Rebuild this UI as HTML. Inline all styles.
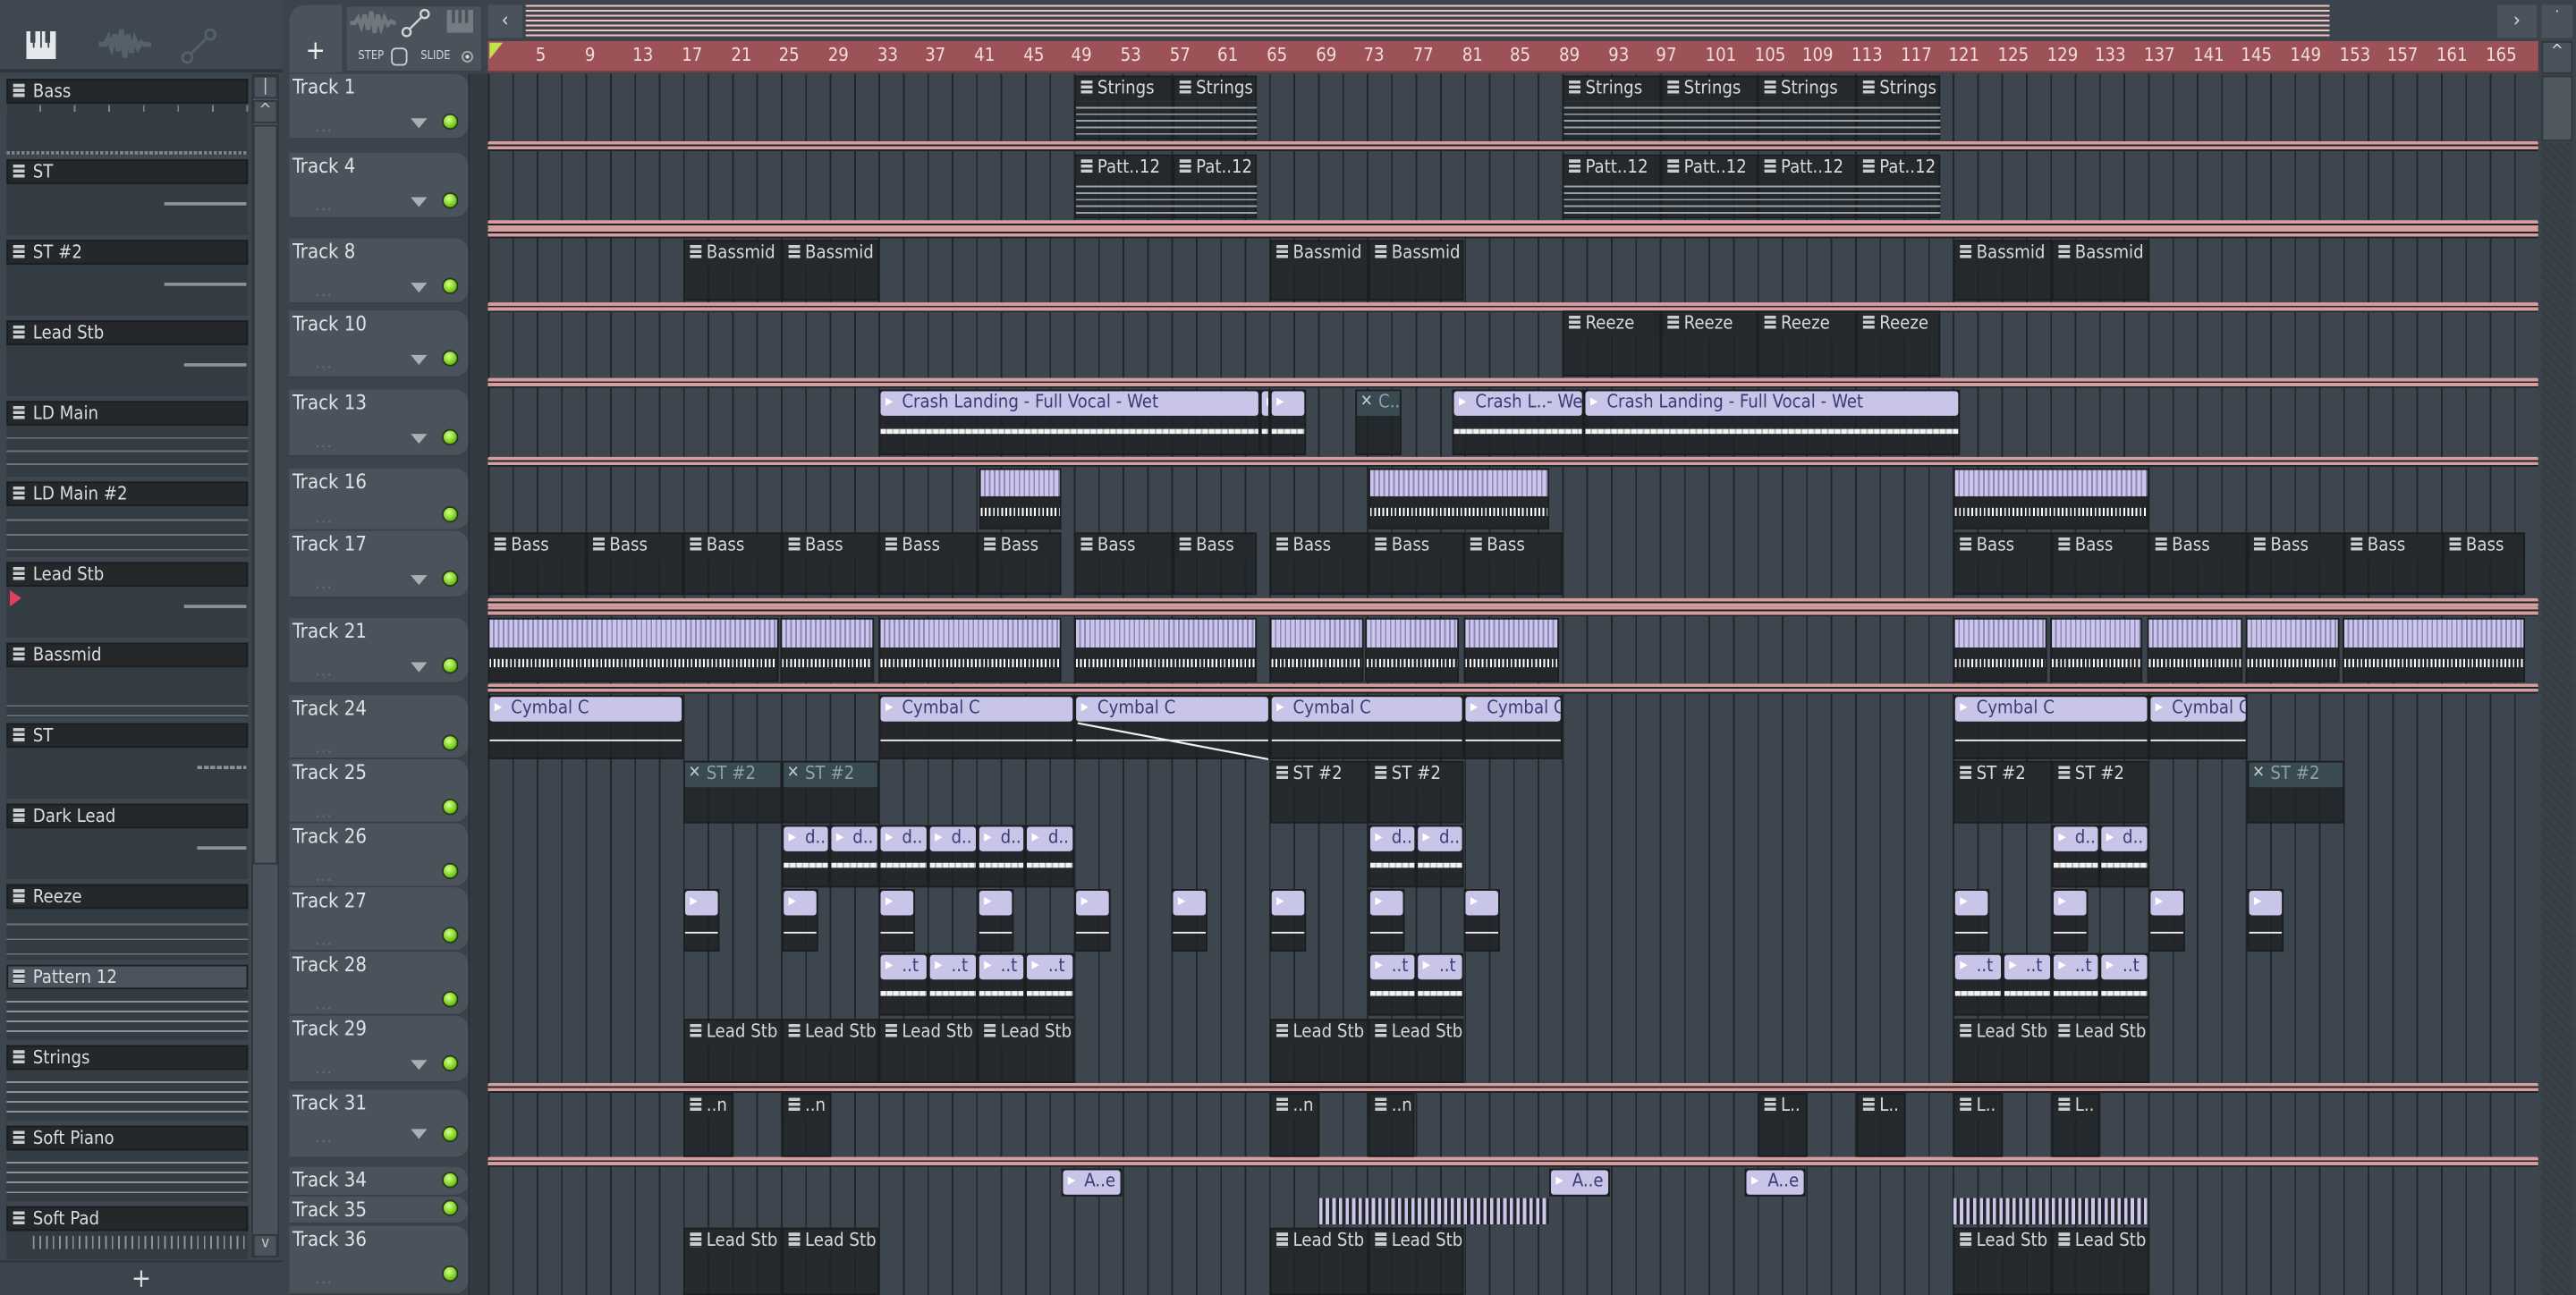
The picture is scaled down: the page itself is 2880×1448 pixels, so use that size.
<!DOCTYPE html>
<html><head><meta charset="utf-8"><style>
*{margin:0;padding:0;box-sizing:border-box}
html,body{width:2880px;height:1448px;overflow:hidden;background:#3b444c}
#s{position:absolute;left:0;top:0;width:1568px;height:788px;transform:scale(1.83673,1.8376);transform-origin:0 0;font-family:"DejaVu Sans Condensed","DejaVu Sans","Liberation Sans",sans-serif;font-stretch:condensed;background:#3b444c}
.a{position:absolute}
.bp{position:absolute;left:4px;width:147px;height:46px;background:#343c43}
.bi{position:absolute;left:4px;width:147px;height:15px;background:#24282b;border:1px solid #1b1e20;color:#d8dde1;font-size:11px;line-height:13px;padding-left:15px}
.bi:before,.pc b:before{content:"";position:absolute;left:3px;top:2px;width:7px;height:9px;background:repeating-linear-gradient(#c8cdd1 0 2px,#24282b 2px 3px);}
.th{position:absolute;left:176px;width:109px;background:#4a535b;border-radius:0 8px 8px 0;color:#dde2e6;font-size:12px;padding:1px 0 0 2px;border-bottom:1px solid #383f45}
.th i{position:absolute;right:6px;width:10px;height:10px;border-radius:50%;background:radial-gradient(circle at 40% 35%,#d8ff90,#7ed321 55%,#4f8a10);border:1px solid #2a3a20}
.th u{position:absolute;right:25px;width:0;height:0;border-left:5px solid transparent;border-right:5px solid transparent;border-top:6px solid #a9b0b5}
.th em{position:absolute;left:16px;font-style:normal;color:#6b747b;font-size:9px;letter-spacing:1px}
.sep{position:absolute;left:297px;width:1248px;height:6px;background:linear-gradient(#d59d9d 0 2px,#1e2326 2px 3px,#d59d9d 3px 5px,#1e2326 5px);border-radius:1px}
.pc{position:absolute;background:rgba(30,34,37,.78);border:1px solid #1c1f21;overflow:hidden}
.pc b{display:block;position:relative;height:15px;background:#26292c;color:#d5dadd;font-weight:normal;font-size:11px;line-height:14px;padding-left:13px;white-space:nowrap;overflow:hidden}
.ac{position:absolute;background:rgba(30,34,37,.82);border:1px solid #1c1f21;overflow:hidden}
.ac b{display:block;height:15px;background:#c9c5e8;border-radius:2px;color:#3d3a78;font-weight:normal;font-size:11px;line-height:14px;padding-left:13px;white-space:nowrap;overflow:hidden;position:relative}
.ac b:before{content:"▸";position:absolute;left:3px;top:0;font-size:10px;color:#fff}
.ac.w:after{content:"";position:absolute;left:0;right:0;top:60%;height:3px;background:repeating-linear-gradient(90deg,#f2f2f2 0 3px,#bbb 3px 4px)}
.ac.t:after{content:"";position:absolute;left:0;right:0;top:70%;height:1px;background:#f2f2f2}
.st{position:absolute;border:1px solid #1c1f21;background:#23272a}
.st:after{content:"";position:absolute;left:0;right:0;top:0;height:45%;background:repeating-linear-gradient(90deg,#cbc6ea 0 2px,#8e88b8 2px 3px)}
.st:before{content:"";position:absolute;left:0;right:0;top:66%;height:5px;z-index:1;background:repeating-linear-gradient(90deg,#fff 0 1px,transparent 1px 2.5px)}
.gc{position:absolute;background:rgba(30,34,37,.8);border:1px solid #1c1f21}
.gc b{display:block;height:15px;background:#3a4a52;color:#8ea0aa;font-weight:normal;font-size:11px;line-height:14px;padding-left:13px;white-space:nowrap;overflow:hidden;position:relative}
.gc b:before{content:"✕";position:absolute;left:2px;color:#c0c8cc;font-size:10px}
.rn{position:absolute;top:27px;color:#f0dcdc;font-size:11px}
</style></head><body><div id="s">
<!-- left browser -->
<div class="a" style="left:0;top:0;width:172px;height:788px;background:#3d464e"></div>
<div class="a" style="left:0;top:0;width:172px;height:44px;background:#3f4850;border-bottom:2px solid #2e353a"></div>
<svg class="a" style="left:16px;top:19px" width="18" height="17" viewBox="0 0 18 17"><rect x="0" y="0" width="18" height="17" fill="#e4e8ea"/><rect x="4" y="0" width="1" height="10" fill="#3f4850"/><rect x="8.5" y="0" width="1" height="10" fill="#3f4850"/><rect x="13" y="0" width="1" height="10" fill="#3f4850"/><rect x="2.5" y="0" width="3" height="7" fill="#3f4850"/><rect x="11.5" y="0" width="3" height="7" fill="#3f4850"/></svg>
<svg class="a" style="left:60px;top:15px" width="32" height="24" viewBox="0 0 32 24"><path d="M0 12h4l2-4 2 6 2-8 2 10 2-13 2 17 2-14 2 11 2-8 2 5 2-3 2 1h4" stroke="#56606a" stroke-width="3" fill="none"/></svg>
<svg class="a" style="left:110px;top:17px" width="22" height="22" viewBox="0 0 22 22"><circle cx="4" cy="18" r="3" stroke="#56606a" stroke-width="1.5" fill="none"/><circle cx="18" cy="4" r="3" stroke="#56606a" stroke-width="1.5" fill="none"/><path d="M6 16L16 6" stroke="#56606a" stroke-width="1.5"/></svg>
<div class="a" style="left:153px;top:45px;width:17px;height:720px;background:#4a535b;border:1px solid #30373c"></div>
<div class="a" style="left:154px;top:46px;width:15px;height:14px;background:#4b545c;border:1px solid #30373c;color:#ccc;font-size:10px;text-align:center">|</div>
<div class="a" style="left:154px;top:61px;width:15px;height:14px;background:#4b545c;border:1px solid #30373c;color:#ccc;font-size:10px;text-align:center">^</div>
<div class="a" style="left:154px;top:76px;width:15px;height:450px;background:#4f585f;border:1px solid #30373c"></div>
<div class="a" style="left:154px;top:751px;width:15px;height:14px;background:#4b545c;border:1px solid #30373c;color:#ccc;font-size:9px;text-align:center">v</div>
<div class="a" style="left:0;top:767px;width:172px;height:21px;background:#3b444c;border-top:1px solid #2e353a;color:#d9dde0;font-size:16px;text-align:center;line-height:20px">+</div>
<div class="bp" style="top:48px"></div><div class="bp" style="top:97px"></div><div class="bp" style="top:146px"></div><div class="bp" style="top:195px"></div><div class="bp" style="top:244px"></div><div class="bp" style="top:293px"></div><div class="bp" style="top:342px"></div><div class="bp" style="top:391px"></div><div class="bp" style="top:440px"></div><div class="bp" style="top:489px"></div><div class="bp" style="top:538px"></div><div class="bp" style="top:587px"></div><div class="bp" style="top:636px"></div><div class="bp" style="top:685px"></div><div class="bp" style="top:734px;height:32px"></div>
<div class="bi" style="top:48px">Bass</div>
<div class="bi" style="top:97px">ST</div>
<div class="bi" style="top:146px">ST #2</div>
<div class="bi" style="top:195px">Lead Stb</div>
<div class="bi" style="top:244px">LD Main</div>
<div class="bi" style="top:293px">LD Main #2</div>
<div class="bi" style="top:342px">Lead Stb</div>
<div class="bi" style="top:391px">Bassmid</div>
<div class="bi" style="top:440px">ST</div>
<div class="bi" style="top:489px">Dark Lead</div>
<div class="bi" style="top:538px">Reeze</div>
<div class="bi" style="top:587px;background:#4b545c">Pattern 12</div>
<div class="bi" style="top:636px">Strings</div>
<div class="bi" style="top:685px">Soft Piano</div>
<div class="bi" style="top:734px">Soft Pad</div>
<div class="a" style="left:6px;top:359px;width:0;height:0;border-top:5px solid transparent;border-bottom:5px solid transparent;border-left:7px solid #e0405a"></div>
<div class="a" style="left:100px;top:123px;width:50px;height:2px;background:#8a9399"></div>
<div class="a" style="left:100px;top:172px;width:50px;height:2px;background:#8a9399"></div>
<div class="a" style="left:112px;top:221px;width:38px;height:2px;background:#8a9399"></div>
<div class="a" style="left:112px;top:368px;width:38px;height:2px;background:#8a9399"></div>
<div class="a" style="left:120px;top:515px;width:30px;height:2px;background:#8a9399"></div>
<div class="a" style="left:120px;top:466px;width:30px;height:2px;background:repeating-linear-gradient(90deg,#8a9399 0 3px,transparent 3px 4px)"></div>
<div class="a" style="left:4px;top:92px;width:147px;height:2px;background:repeating-linear-gradient(90deg,#7c858c 0 2px,transparent 2px 3px)"></div>
<div class="a" style="left:4px;top:64px;width:147px;height:4px;background:repeating-linear-gradient(90deg,transparent 0 20px,#7c858c 20px 21px)"></div>
<div class="a" style="left:4px;top:262px;width:147px;height:24px;background:repeating-linear-gradient(#343c43 0 4px,#6c757b 4px 5px,#343c43 5px 8px)"></div>
<div class="a" style="left:4px;top:311px;width:147px;height:24px;background:repeating-linear-gradient(#343c43 0 5px,#6c757b 5px 6px,#343c43 6px 9px)"></div>
<div class="a" style="left:4px;top:424px;width:147px;height:12px;background:repeating-linear-gradient(#343c43 0 5px,#6c757b 5px 6px)"></div>
<div class="a" style="left:4px;top:556px;width:147px;height:26px;background:repeating-linear-gradient(#343c43 0 6px,#6c757b 6px 7px,#343c43 7px 9px)"></div>
<div class="a" style="left:4px;top:606px;width:147px;height:26px;background:repeating-linear-gradient(#343c43 0 3px,#8a9399 3px 4px,#343c43 4px 6px)"></div>
<div class="a" style="left:4px;top:655px;width:147px;height:26px;background:repeating-linear-gradient(#343c43 0 3px,#8a9399 3px 4px,#343c43 4px 6px)"></div>
<div class="a" style="left:4px;top:704px;width:147px;height:26px;background:repeating-linear-gradient(#343c43 0 3px,#8a9399 3px 4px,#343c43 4px 6px)"></div>
<div class="a" style="left:20px;top:752px;width:130px;height:8px;background:repeating-linear-gradient(90deg,#8a9399 0 1px,transparent 1px 4px)"></div>

<!-- top toolbar of playlist -->
<div class="a" style="left:172px;top:0;width:1396px;height:45px;background:#3b444c"></div>
<div class="a" style="left:176px;top:3px;width:32px;height:41px;background:#4a535b;border-radius:10px 0 0 0;color:#eee;font-size:16px;text-align:center;padding-top:18px">+</div>
<div class="a" style="left:210px;top:3px;width:84px;height:41px;background:#4a535b;border:1px solid #3a4248"></div>
<svg class="a" style="left:213px;top:5px" width="28" height="18" viewBox="0 0 28 18"><path d="M0 9h3l2-3 2 5 2-7 2 9 2-11 2 13 2-11 2 8 2-6 2 4 2-2 2 1h1" stroke="#6f787f" stroke-width="2.5" fill="none"/></svg>
<svg class="a" style="left:244px;top:5px" width="18" height="18" viewBox="0 0 18 18"><circle cx="3.5" cy="14.5" r="2.5" stroke="#d0d4d7" stroke-width="1.3" fill="none"/><circle cx="14.5" cy="3.5" r="2.5" stroke="#d0d4d7" stroke-width="1.3" fill="none"/><path d="M5.5 12.5l7-7" stroke="#d0d4d7" stroke-width="1.3"/></svg>
<svg class="a" style="left:272px;top:6px" width="16" height="14" viewBox="0 0 16 14"><rect width="16" height="14" fill="#737c83"/><rect x="3" y="0" width="2" height="8" fill="#4a535b"/><rect x="7" y="0" width="2" height="8" fill="#4a535b"/><rect x="11" y="0" width="2" height="8" fill="#4a535b"/></svg>
<div class="a" style="left:218px;top:30px;color:#d0d4d7;font-size:7px">STEP</div>
<div class="a" style="left:238px;top:29px;width:10px;height:11px;border:1px solid #c8cdd1;border-radius:3px"></div>
<div class="a" style="left:256px;top:30px;color:#d0d4d7;font-size:7px">SLIDE</div>
<div class="a" style="left:281px;top:31px;width:7px;height:7px;border:1px solid #aaa;border-radius:50%;background:radial-gradient(#ddd 30%,transparent 35%)"></div>
<div class="a" style="left:297px;top:3px;width:21px;height:20px;background:#4a535b;color:#ddd;font-size:12px;text-align:center;line-height:19px">‹</div>
<div class="a" style="left:320px;top:3px;width:1098px;height:20px;background:repeating-linear-gradient(#f0c3c3 0 1px,#3f464c 1px 3px)"></div>
<div class="a" style="left:1520px;top:3px;width:24px;height:20px;background:#4a535b;color:#ddd;font-size:12px;text-align:center;line-height:19px">›</div>
<div class="a" style="left:1547px;top:3px;width:19px;height:20px;background:#4a535b;color:#ddd;font-size:9px;text-align:center">·</div>
<!-- ruler -->
<div class="a" style="left:297px;top:25px;width:1248px;height:19px;background:#9c5257;border-bottom:1px solid #7a3c40"></div>
<div class="a" style="left:298px;top:26px;width:0;height:0;border-left:8px solid #c4e34a;border-bottom:10px solid transparent"></div>
<div class="rn" style="left:326px">5</div><div class="rn" style="left:356px">9</div><div class="rn" style="left:385px">13</div><div class="rn" style="left:415px">17</div><div class="rn" style="left:445px">21</div><div class="rn" style="left:474px">25</div><div class="rn" style="left:504px">29</div><div class="rn" style="left:534px">33</div><div class="rn" style="left:563px">37</div><div class="rn" style="left:593px">41</div><div class="rn" style="left:623px">45</div><div class="rn" style="left:652px">49</div><div class="rn" style="left:682px">53</div><div class="rn" style="left:712px">57</div><div class="rn" style="left:741px">61</div><div class="rn" style="left:771px">65</div><div class="rn" style="left:801px">69</div><div class="rn" style="left:830px">73</div><div class="rn" style="left:860px">77</div><div class="rn" style="left:890px">81</div><div class="rn" style="left:919px">85</div><div class="rn" style="left:949px">89</div><div class="rn" style="left:979px">93</div><div class="rn" style="left:1008px">97</div><div class="rn" style="left:1038px">101</div><div class="rn" style="left:1068px">105</div><div class="rn" style="left:1097px">109</div><div class="rn" style="left:1127px">113</div><div class="rn" style="left:1157px">117</div><div class="rn" style="left:1186px">121</div><div class="rn" style="left:1216px">125</div><div class="rn" style="left:1246px">129</div><div class="rn" style="left:1275px">133</div><div class="rn" style="left:1305px">137</div><div class="rn" style="left:1335px">141</div><div class="rn" style="left:1364px">145</div><div class="rn" style="left:1394px">149</div><div class="rn" style="left:1424px">153</div><div class="rn" style="left:1453px">157</div><div class="rn" style="left:1483px">161</div><div class="rn" style="left:1513px">165</div>
<!-- grid -->
<div class="a" style="left:297px;top:45px;width:1248px;height:743px;background:repeating-linear-gradient(90deg,#222829 0 1px,#3d464e 1px 14.86px)"></div>
<div class="a" style="left:285px;top:45px;width:12px;height:743px;background:#333b41;border-left:1px solid #2a3035"></div>
<div class="a" style="left:1547px;top:25px;width:19px;height:20px;background:#4a535b;color:#ddd;font-size:10px;text-align:center;border:1px solid #30373c">^</div>
<div class="a" style="left:1547px;top:46px;width:19px;height:40px;background:#4f585f;border:1px solid #30373c"></div>
<div class="a" style="left:1547px;top:87px;width:19px;height:701px;background:repeating-linear-gradient(45deg,#3a4248 0 2px,#363d43 2px 4px)"></div>
<!-- separators -->
<div class="sep" style="top:86px"></div><div class="sep" style="top:134px"></div><div class="sep" style="top:139px"></div>
<div class="sep" style="top:184px"></div><div class="sep" style="top:230px"></div><div class="sep" style="top:278px"></div>
<div class="sep" style="top:364px"></div><div class="sep" style="top:369px"></div><div class="sep" style="top:416px"></div>
<div class="sep" style="top:659px"></div><div class="sep" style="top:704px"></div>
<!-- track headers -->
<div class="th" style="top:45px;height:40px">Track 1<u style="top:27px"></u><i style="top:24px"></i><em style="top:28px">...</em></div>
<div class="th" style="top:93px;height:40px">Track 4<u style="top:27px"></u><i style="top:24px"></i><em style="top:28px">...</em></div>
<div class="th" style="top:145px;height:40px">Track 8<u style="top:27px"></u><i style="top:24px"></i><em style="top:28px">...</em></div>
<div class="th" style="top:189px;height:41px">Track 10<u style="top:27px"></u><i style="top:24px"></i><em style="top:28px">...</em></div>
<div class="th" style="top:237px;height:41px">Track 13<u style="top:27px"></u><i style="top:24px"></i><em style="top:28px">...</em></div>
<div class="th" style="top:285px;height:38px">Track 16<i style="top:23px"></i><em style="top:26px">...</em></div>
<div class="th" style="top:323px;height:41px">Track 17<u style="top:27px"></u><i style="top:24px"></i><em style="top:28px">...</em></div>
<div class="th" style="top:376px;height:40px">Track 21<u style="top:27px"></u><i style="top:24px"></i><em style="top:28px">...</em></div>
<div class="th" style="top:423px;height:39px">Track 24<i style="top:24px"></i><em style="top:28px">...</em></div>
<div class="th" style="top:462px;height:39px">Track 25<i style="top:24px"></i><em style="top:28px">...</em></div>
<div class="th" style="top:501px;height:39px">Track 26<i style="top:24px"></i><em style="top:28px">...</em></div>
<div class="th" style="top:540px;height:39px">Track 27<i style="top:24px"></i><em style="top:28px">...</em></div>
<div class="th" style="top:579px;height:39px">Track 28<i style="top:24px"></i><em style="top:28px">...</em></div>
<div class="th" style="top:618px;height:41px">Track 29<u style="top:27px"></u><i style="top:24px"></i><em style="top:28px">...</em></div>
<div class="th" style="top:663px;height:42px">Track 31<u style="top:24px"></u><i style="top:22px"></i><em style="top:25px">...</em></div>
<div class="th" style="top:710px;height:18px">Track 34<i style="top:3px"></i></div>
<div class="th" style="top:728px;height:17px">Track 35<i style="top:2px"></i></div>
<div class="th" style="top:746px;height:42px">Track 36<i style="top:24px"></i><em style="top:28px">...</em></div>

<!-- Track 1 / 4 -->
<div class="pc" style="left:654px;top:46px;width:60px;height:39px"><b>Strings</b></div>
<div class="pc" style="left:714px;top:46px;width:51px;height:39px"><b>Strings</b></div>
<div class="pc" style="left:951px;top:46px;width:60px;height:39px"><b>Strings</b></div>
<div class="pc" style="left:1011px;top:46px;width:59px;height:39px"><b>Strings</b></div>
<div class="pc" style="left:1070px;top:46px;width:60px;height:39px"><b>Strings</b></div>
<div class="pc" style="left:1130px;top:46px;width:51px;height:39px"><b>Strings</b></div>
<div class="pc" style="left:654px;top:94px;width:60px;height:39px"><b>Patt..12</b></div>
<div class="pc" style="left:714px;top:94px;width:51px;height:39px"><b>Pat..12</b></div>
<div class="pc" style="left:951px;top:94px;width:60px;height:39px"><b>Patt..12</b></div>
<div class="pc" style="left:1011px;top:94px;width:59px;height:39px"><b>Patt..12</b></div>
<div class="pc" style="left:1070px;top:94px;width:60px;height:39px"><b>Patt..12</b></div>
<div class="pc" style="left:1130px;top:94px;width:51px;height:39px"><b>Pat..12</b></div>
<div class="a" style="left:655px;top:62px;width:110px;height:22px;background:repeating-linear-gradient(#0000 0 3px,#9aa2a8 3px 4px)"></div>
<div class="a" style="left:952px;top:62px;width:229px;height:22px;background:repeating-linear-gradient(#0000 0 3px,#9aa2a8 3px 4px)"></div>
<div class="a" style="left:655px;top:110px;width:110px;height:22px;background:repeating-linear-gradient(#0000 0 3px,#9aa2a8 3px 4px)"></div>
<div class="a" style="left:952px;top:110px;width:229px;height:22px;background:repeating-linear-gradient(#0000 0 3px,#9aa2a8 3px 4px)"></div>
<!-- Track 8 -->
<div class="pc" style="left:416px;top:146px;width:60px;height:37px"><b>Bassmid</b></div>
<div class="pc" style="left:476px;top:146px;width:59px;height:37px"><b>Bassmid</b></div>
<div class="pc" style="left:773px;top:146px;width:60px;height:37px"><b>Bassmid</b></div>
<div class="pc" style="left:833px;top:146px;width:58px;height:37px"><b>Bassmid</b></div>
<div class="pc" style="left:1189px;top:146px;width:60px;height:37px"><b>Bassmid</b></div>
<div class="pc" style="left:1249px;top:146px;width:59px;height:37px"><b>Bassmid</b></div>
<!-- Track 10 -->
<div class="pc" style="left:951px;top:189px;width:60px;height:40px"><b>Reeze</b></div>
<div class="pc" style="left:1011px;top:189px;width:59px;height:40px"><b>Reeze</b></div>
<div class="pc" style="left:1070px;top:189px;width:60px;height:40px"><b>Reeze</b></div>
<div class="pc" style="left:1130px;top:189px;width:51px;height:40px"><b>Reeze</b></div>
<!-- Track 13 -->
<div class="ac w" style="left:535px;top:237px;width:232px;height:40px"><b>Crash Landing - Full Vocal - Wet</b></div>
<div class="ac w" style="left:767px;top:237px;width:6px;height:40px"><b></b></div>
<div class="ac w" style="left:773px;top:237px;width:22px;height:40px"><b></b></div>
<div class="gc" style="left:825px;top:237px;width:28px;height:40px"><b>C..</b></div>
<div class="ac w" style="left:884px;top:237px;width:80px;height:40px"><b>Crash L..- Wet</b></div>
<div class="ac w" style="left:964px;top:237px;width:229px;height:40px"><b>Crash Landing - Full Vocal - Wet</b></div>
<!-- Track 16 -->
<div class="st" style="left:596px;top:285px;width:50px;height:37px"></div>
<div class="st" style="left:833px;top:285px;width:110px;height:37px"></div>
<div class="st" style="left:1189px;top:285px;width:119px;height:37px"></div>
<!-- Track 17 -->
<div class="pc" style="left:297px;top:324px;width:60px;height:38px"><b>Bass</b></div>
<div class="pc" style="left:357px;top:324px;width:59px;height:38px"><b>Bass</b></div>
<div class="pc" style="left:416px;top:324px;width:60px;height:38px"><b>Bass</b></div>
<div class="pc" style="left:476px;top:324px;width:59px;height:38px"><b>Bass</b></div>
<div class="pc" style="left:535px;top:324px;width:60px;height:38px"><b>Bass</b></div>
<div class="pc" style="left:595px;top:324px;width:51px;height:38px"><b>Bass</b></div>
<div class="pc" style="left:654px;top:324px;width:60px;height:38px"><b>Bass</b></div>
<div class="pc" style="left:714px;top:324px;width:51px;height:38px"><b>Bass</b></div>
<div class="pc" style="left:773px;top:324px;width:60px;height:38px"><b>Bass</b></div>
<div class="pc" style="left:833px;top:324px;width:58px;height:38px"><b>Bass</b></div>
<div class="pc" style="left:891px;top:324px;width:60px;height:38px"><b>Bass</b></div>
<div class="pc" style="left:1189px;top:324px;width:60px;height:38px"><b>Bass</b></div>
<div class="pc" style="left:1249px;top:324px;width:59px;height:38px"><b>Bass</b></div>
<div class="pc" style="left:1308px;top:324px;width:60px;height:38px"><b>Bass</b></div>
<div class="pc" style="left:1368px;top:324px;width:59px;height:38px"><b>Bass</b></div>
<div class="pc" style="left:1427px;top:324px;width:60px;height:38px"><b>Bass</b></div>
<div class="pc" style="left:1487px;top:324px;width:50px;height:38px"><b>Bass</b></div>
<!-- Track 21 -->
<div class="st" style="left:297px;top:376px;width:177px;height:39px"></div>
<div class="st" style="left:475px;top:376px;width:57px;height:39px"></div>
<div class="st" style="left:535px;top:376px;width:111px;height:39px"></div>
<div class="st" style="left:654px;top:376px;width:111px;height:39px"></div>
<div class="st" style="left:773px;top:376px;width:57px;height:39px"></div>
<div class="st" style="left:831px;top:376px;width:57px;height:39px"></div>
<div class="st" style="left:891px;top:376px;width:58px;height:39px"></div>
<div class="st" style="left:1189px;top:376px;width:57px;height:39px"></div>
<div class="st" style="left:1248px;top:376px;width:56px;height:39px"></div>
<div class="st" style="left:1307px;top:376px;width:58px;height:39px"></div>
<div class="st" style="left:1367px;top:376px;width:57px;height:39px"></div>
<div class="st" style="left:1426px;top:376px;width:111px;height:39px"></div>
<!-- Track 24 -->
<div class="ac t" style="left:297px;top:423px;width:119px;height:39px"><b>Cymbal C</b></div>
<div class="ac t" style="left:535px;top:423px;width:119px;height:39px"><b>Cymbal C</b></div>
<div class="ac t" style="left:654px;top:423px;width:119px;height:39px"><b>Cymbal C</b></div>
<div class="ac t" style="left:773px;top:423px;width:118px;height:39px"><b>Cymbal C</b></div>
<div class="ac t" style="left:891px;top:423px;width:60px;height:39px"><b>Cymbal C</b></div>
<div class="ac t" style="left:1189px;top:423px;width:119px;height:39px"><b>Cymbal C</b></div>
<div class="ac t" style="left:1308px;top:423px;width:60px;height:39px"><b>Cymbal C</b></div>
<svg class="a" style="left:654px;top:438px" width="120" height="26"><path d="M2 2L118 24" stroke="#eee" stroke-width="1.2"/></svg>
<!-- Track 25 -->
<div class="gc" style="left:416px;top:463px;width:60px;height:38px"><b>ST #2</b></div>
<div class="gc" style="left:476px;top:463px;width:59px;height:38px"><b>ST #2</b></div>
<div class="pc" style="left:773px;top:463px;width:60px;height:38px"><b>ST #2</b></div>
<div class="pc" style="left:833px;top:463px;width:58px;height:38px"><b>ST #2</b></div>
<div class="pc" style="left:1189px;top:463px;width:60px;height:38px"><b>ST #2</b></div>
<div class="pc" style="left:1249px;top:463px;width:59px;height:38px"><b>ST #2</b></div>
<div class="gc" style="left:1368px;top:463px;width:59px;height:38px"><b>ST #2</b></div>
<!-- Track 26 -->
<div class="ac w" style="left:476px;top:502px;width:29px;height:38px"><b>d..</b></div>
<div class="ac w" style="left:505px;top:502px;width:30px;height:38px"><b>d..</b></div>
<div class="ac w" style="left:535px;top:502px;width:30px;height:38px"><b>d..</b></div>
<div class="ac w" style="left:565px;top:502px;width:30px;height:38px"><b>d..</b></div>
<div class="ac w" style="left:595px;top:502px;width:29px;height:38px"><b>d..</b></div>
<div class="ac w" style="left:624px;top:502px;width:30px;height:38px"><b>d..</b></div>
<div class="ac w" style="left:833px;top:502px;width:29px;height:38px"><b>d..</b></div>
<div class="ac w" style="left:862px;top:502px;width:29px;height:38px"><b>d..</b></div>
<div class="ac w" style="left:1249px;top:502px;width:29px;height:38px"><b>d..</b></div>
<div class="ac w" style="left:1278px;top:502px;width:30px;height:38px"><b>d..</b></div>
<!-- Track 27 -->
<div class="ac t" style="left:416px;top:541px;width:22px;height:38px"><b></b></div>
<div class="ac t" style="left:476px;top:541px;width:22px;height:38px"><b></b></div>
<div class="ac t" style="left:535px;top:541px;width:22px;height:38px"><b></b></div>
<div class="ac t" style="left:595px;top:541px;width:22px;height:38px"><b></b></div>
<div class="ac t" style="left:654px;top:541px;width:22px;height:38px"><b></b></div>
<div class="ac t" style="left:713px;top:541px;width:22px;height:38px"><b></b></div>
<div class="ac t" style="left:773px;top:541px;width:22px;height:38px"><b></b></div>
<div class="ac t" style="left:833px;top:541px;width:22px;height:38px"><b></b></div>
<div class="ac t" style="left:891px;top:541px;width:22px;height:38px"><b></b></div>
<div class="ac t" style="left:1189px;top:541px;width:22px;height:38px"><b></b></div>
<div class="ac t" style="left:1249px;top:541px;width:22px;height:38px"><b></b></div>
<div class="ac t" style="left:1308px;top:541px;width:22px;height:38px"><b></b></div>
<div class="ac t" style="left:1368px;top:541px;width:22px;height:38px"><b></b></div>
<!-- Track 28 -->
<div class="ac w" style="left:535px;top:580px;width:30px;height:38px"><b>..t</b></div>
<div class="ac w" style="left:565px;top:580px;width:30px;height:38px"><b>..t</b></div>
<div class="ac w" style="left:595px;top:580px;width:29px;height:38px"><b>..t</b></div>
<div class="ac w" style="left:624px;top:580px;width:30px;height:38px"><b>..t</b></div>
<div class="ac w" style="left:833px;top:580px;width:29px;height:38px"><b>..t</b></div>
<div class="ac w" style="left:862px;top:580px;width:29px;height:38px"><b>..t</b></div>
<div class="ac w" style="left:1189px;top:580px;width:30px;height:38px"><b>..t</b></div>
<div class="ac w" style="left:1219px;top:580px;width:30px;height:38px"><b>..t</b></div>
<div class="ac w" style="left:1249px;top:580px;width:29px;height:38px"><b>..t</b></div>
<div class="ac w" style="left:1278px;top:580px;width:30px;height:38px"><b>..t</b></div>
<!-- Track 29 -->
<div class="pc" style="left:416px;top:620px;width:60px;height:39px"><b>Lead Stb</b></div>
<div class="pc" style="left:476px;top:620px;width:59px;height:39px"><b>Lead Stb</b></div>
<div class="pc" style="left:535px;top:620px;width:60px;height:39px"><b>Lead Stb</b></div>
<div class="pc" style="left:595px;top:620px;width:59px;height:39px"><b>Lead Stb</b></div>
<div class="pc" style="left:773px;top:620px;width:60px;height:39px"><b>Lead Stb</b></div>
<div class="pc" style="left:833px;top:620px;width:58px;height:39px"><b>Lead Stb</b></div>
<div class="pc" style="left:1189px;top:620px;width:60px;height:39px"><b>Lead Stb</b></div>
<div class="pc" style="left:1249px;top:620px;width:59px;height:39px"><b>Lead Stb</b></div>
<!-- Track 31 -->
<div class="pc" style="left:416px;top:665px;width:30px;height:39px"><b>..n</b></div>
<div class="pc" style="left:476px;top:665px;width:30px;height:39px"><b>..n</b></div>
<div class="pc" style="left:773px;top:665px;width:30px;height:39px"><b>..n</b></div>
<div class="pc" style="left:833px;top:665px;width:28px;height:39px"><b>..n</b></div>
<div class="pc" style="left:1070px;top:665px;width:30px;height:39px"><b>L..</b></div>
<div class="pc" style="left:1130px;top:665px;width:30px;height:39px"><b>L..</b></div>
<div class="pc" style="left:1189px;top:665px;width:30px;height:39px"><b>L..</b></div>
<div class="pc" style="left:1249px;top:665px;width:29px;height:39px"><b>L..</b></div>
<!-- Track 34/35 -->
<div class="ac" style="left:646px;top:711px;width:37px;height:17px"><b>A..e</b></div>
<div class="ac" style="left:943px;top:711px;width:37px;height:17px"><b>A..e</b></div>
<div class="ac" style="left:1062px;top:711px;width:37px;height:17px"><b>A..e</b></div>
<div class="a" style="left:803px;top:729px;width:140px;height:16px;background:repeating-linear-gradient(90deg,#cbc6ea 0 2px,#23272a 2px 4px)"></div>
<div class="a" style="left:1189px;top:729px;width:119px;height:16px;background:repeating-linear-gradient(90deg,#cbc6ea 0 2px,#23272a 2px 4px)"></div>
<!-- Track 36 -->
<div class="pc" style="left:416px;top:747px;width:60px;height:41px"><b>Lead Stb</b></div>
<div class="pc" style="left:476px;top:747px;width:59px;height:41px"><b>Lead Stb</b></div>
<div class="pc" style="left:773px;top:747px;width:60px;height:41px"><b>Lead Stb</b></div>
<div class="pc" style="left:833px;top:747px;width:58px;height:41px"><b>Lead Stb</b></div>
<div class="pc" style="left:1189px;top:747px;width:60px;height:41px"><b>Lead Stb</b></div>
<div class="pc" style="left:1249px;top:747px;width:59px;height:41px"><b>Lead Stb</b></div>
</div></body></html>
